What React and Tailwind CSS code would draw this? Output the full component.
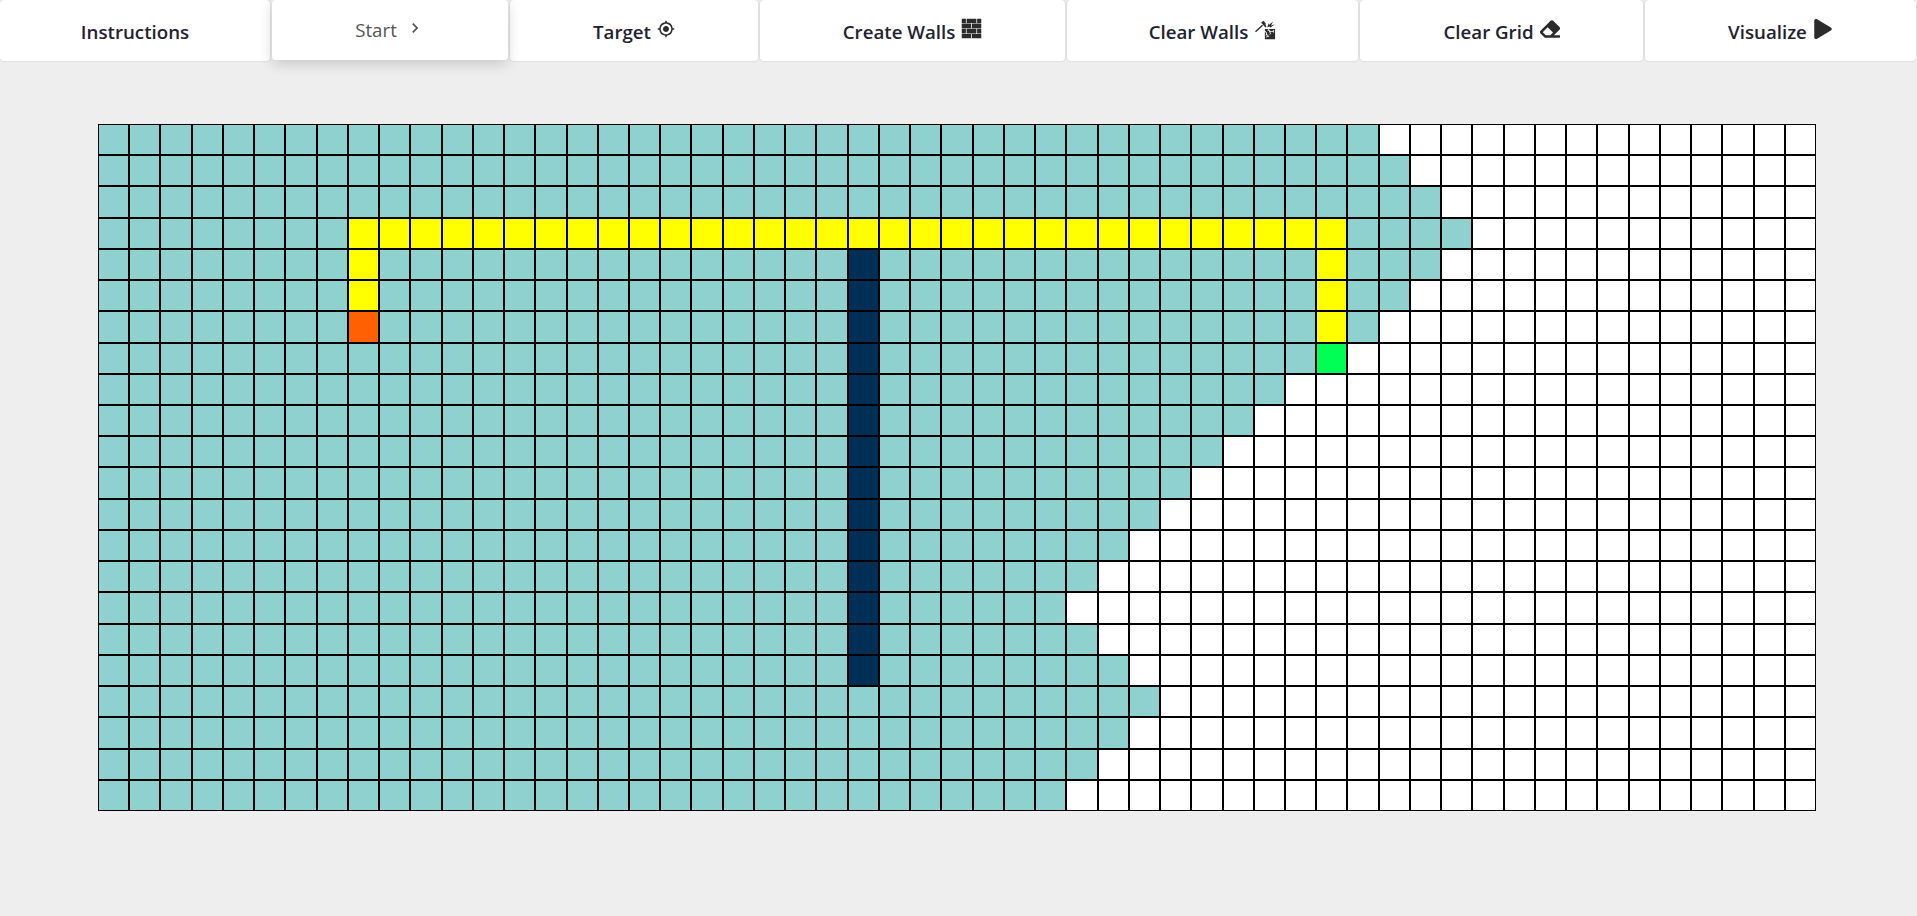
import { GiBrickWall, GiHammerBreak } from 'react-icons/gi';
import { FaEraser, FaPlay } from 'react-icons/fa';
import { MdGpsFixed, MdChevronRight } from 'react-icons/md';

const ROWS = 22;
const COLS = 55;
// how far the search got in each row
const visited = [41, 42, 43, 44, 43, 42, 41, 39, 38, 37, 36, 35, 34, 33, 32, 31, 32, 33, 34, 33, 32, 31];

function cellColor(r, c) {
  if (r === 6 && c === 8) return 'bg-[#ff6000]';
  if (r === 7 && c === 39) return 'bg-[#00ff55]';
  if (r === 3 && c >= 8 && c <= 39) return 'bg-[#ffff00]';
  if (c === 8 && r >= 3 && r <= 5) return 'bg-[#ffff00]';
  if (c === 39 && r >= 3 && r <= 6) return 'bg-[#ffff00]';
  if (c === 24 && r >= 4 && r <= 17) return 'bg-[#002f55]';
  if (c < visited[r]) return 'bg-[#8ed1cf]';
  return 'bg-white';
}

const tab = 'h-[61px] bg-white rounded shadow-[0_0_2px_rgba(0,0,0,0.18)] flex items-center justify-center gap-[6px] pt-[4px]';
const icon = 'text-[#2b2b2b] -mt-[8px]';

export default function App() {
  return (
    <div className="min-h-[916px] bg-[#eeeeee] overflow-hidden font-['Open_Sans',sans-serif]">
      <div className="flex gap-[2px] text-[18.7px] font-[550] text-[#1f2230]">
        <div className={tab + ' w-[270px]'}>Instructions</div>
        <div className="relative w-[236px] h-[60px] pt-[1px] bg-white rounded shadow-[0_4px_14px_rgba(0,0,0,0.16)] flex items-center justify-center gap-[8px] font-medium text-[#555555]">
          Start <MdChevronRight size={20} className="-mt-[6px]" />
        </div>
        <div className={tab + ' w-[248px]'}>Target <MdGpsFixed size={18} className={icon} /></div>
        <div className={tab + ' w-[305px]'}>Create Walls <GiBrickWall size={21} className={icon} /></div>
        <div className={tab + ' w-[291px]'}>Clear Walls <GiHammerBreak size={22} className={icon} /></div>
        <div className={tab + ' w-[283px]'}>Clear Grid <FaEraser size={20} className={icon} /></div>
        <div className={tab + ' flex-1 mr-px'}>Visualize <FaPlay size={20} className={icon} /></div>
      </div>
      <div className="ml-[98px] mt-[63px] w-[1718px] h-[687px] grid grid-cols-[repeat(55,1fr)] grid-rows-[repeat(22,1fr)]">
        {Array.from({ length: ROWS * COLS }, (_, i) => (
          <div key={i} className={'border border-black ' + cellColor(Math.floor(i / COLS), i % COLS)} />
        ))}
      </div>
    </div>
  );
}
